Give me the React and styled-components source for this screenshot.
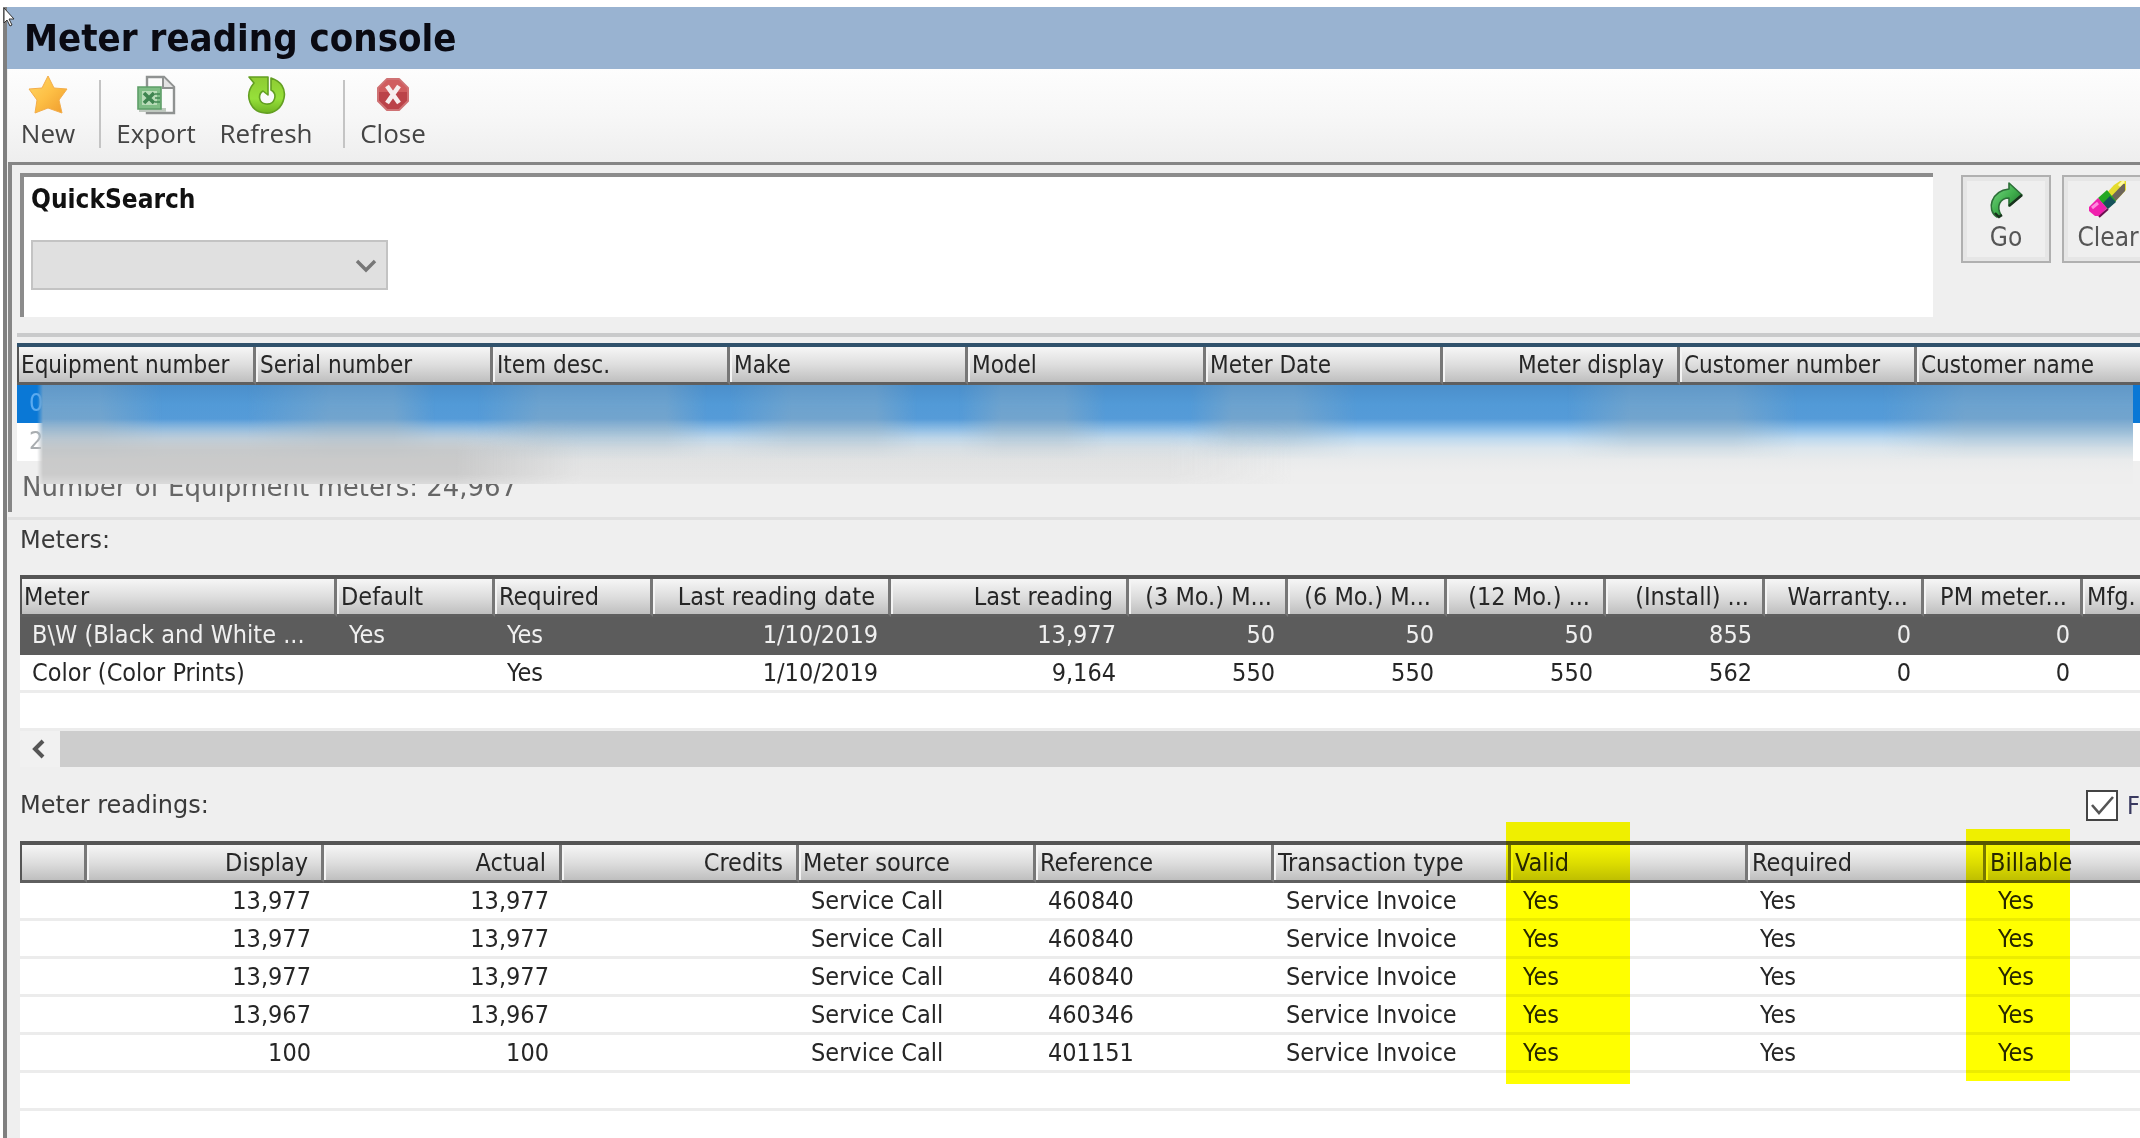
import React from 'react'

import styled, { createGlobalStyle, css } from 'styled-components'

const GlobalStyle = createGlobalStyle`
  * {
    box-sizing: border-box;
  }
  body {
    margin: 0;
    background: #fff;
    color: #262626;
    font-family: 'DejaVu Sans Condensed', 'DejaVu Sans', sans-serif;
    font-size: 25px;
  }
`

const Page = styled.div`
  display: flex;
  height: 100vh;
  padding: 7px 0 0 3px;
  overflow: hidden;
`

const Window = styled.main`
  position: relative;
  display: flex;
  flex: 1;
  flex-direction: column;
  min-width: 0;
  padding-left: 1px;
  border-left: 4px solid #7f7f7f;
  background: #efefef;
`

const Pointer = styled.svg`
  position: absolute;
  top: 0;
  left: -4px;
  width: 12px;
  height: 20px;
`

const TitleBar = styled.header`
  height: 62px;
  margin-left: -1px;
  padding: 0 17px;
  background: #99b3d1;
`

const Title = styled.h1`
  margin: 0;
  color: #0a0a12;
  font-size: 38px;
  line-height: 62px;
`

const Toolbar = styled.nav`
  display: flex;
  align-items: flex-start;
  height: 93px;
  padding-top: 5px;
  background: linear-gradient(#fdfdfd, #f7f7f7 50%, #eee);
`

const ToolButton = styled.button`
  display: flex;
  flex-direction: column;
  align-items: center;
  width: ${props => props.$width}px;
  padding: 0;
  border: 0;
  background: none;
  color: #444;
  font-family: 'Open Sans', 'Noto Sans', sans-serif;
  font-size: 26px;
  line-height: 34px;

  svg {
    width: 40px;
    height: 42px;
  }
`

const Separator = styled.span`
  width: 2px;
  height: 68px;
  margin: 6px 11px 0;
  background: #c4c4c4;
`

const SearchPanel = styled.section`
  padding: 8px 0 10px;
  border-top: 3px solid #858585;
  border-left: 4px solid #868686;
  overflow: hidden;
`

const SearchRow = styled.div`
  display: flex;
  gap: 11px;
  margin: 0 -14px 16px 8px;
`

const SearchBox = styled.div`
  flex: 1;
  height: 144px;
  margin-right: 17px;
  padding: 7px 7px 0;
  border: 4px solid #8c8c8c;
  border-right: 0;
  border-bottom: 0;
  background: #fff;
`

const SearchLabel = styled.label`
  display: block;
  margin-bottom: 26px;
  color: #111;
  font-size: 26px;
  font-weight: bold;
  line-height: 30px;
`

const SelectFrame = styled.div`
  position: relative;
  width: 357px;

  svg {
    position: absolute;
    top: 19px;
    right: 11px;
    width: 22px;
    height: 14px;
    pointer-events: none;
  }
`

const Select = styled.select`
  display: block;
  width: 100%;
  height: 50px;
  border: 2px solid #c3c3c3;
  border-radius: 0;
  background: #e0e0e0;
  opacity: 1;
  appearance: none;
`

const PushButton = styled.button`
  display: flex;
  flex-direction: column;
  align-items: center;
  width: ${props => props.$width}px;
  height: 88px;
  margin-top: 2px;
  padding: 3px 0 0;
  border: 2px solid #b0b0b0;
  background: #efefef;
  box-shadow: inset 0 0 0 4px #e6e6e6;
  color: #555;
  font-family: inherit;
  font-size: 26px;
  line-height: 34px;

  svg {
    width: 42px;
    height: 40px;
  }
`

const Divider = styled.div`
  height: 4px;
  margin: 0 0 6px 5px;
  background: #c9cacb;
`

const GridFrame = styled.div`
  position: relative;
  flex: ${props => (props.$fill ? '1' : 'none')};
  min-height: 0;
  margin-left: ${props => (props.$inset ? '5px' : '12px')};
  border-top: 4px solid ${props => (props.$inset ? '#30516b' : '#555')};
  background: #fff;
`

const Grid = styled.table`
  width: 100%;
  border-collapse: separate;
  border-spacing: 0;
  table-layout: fixed;
  white-space: nowrap;
`

const HeadCell = styled.th`
  height: 38px;
  padding: 0 ${props => (props.$right ? '13px' : '0')} 0 4px;
  border-right: 3px solid #777;
  border-bottom: 3px solid #5f5f5f;
  background: linear-gradient(#f6f6f6, #dedede 50%, #bfbfbf);
  box-shadow: inset 2px 0 #f4f4f4;
  font-size: ${props => (props.$compact ? '24px' : '25px')};
  font-weight: normal;
  line-height: 30px;
  text-align: ${props => (props.$right ? 'right' : 'left')};

  &:first-child {
    box-shadow: inset 2px 0 #555;
  }

  &:last-child {
    border-right: 0;
  }
`

const Row = styled.tr`
  color: ${props => props.$muted && '#a9adb0'};
  ${props =>
    props.$selected &&
    css`
      background: #5c5c5c;
      color: #f0f0f0;
    `}
  ${props =>
    props.$active &&
    css`
      background: #0a78d6;
      color: #5aaaf0;
    `}
`

const Cell = styled.td`
  height: 38px;
  padding: 0 ${props => (props.$right ? '13px' : '0')} 0 12px;
  border-bottom: 3px solid ${props => (props.$plain ? 'transparent' : '#ececec')};
  line-height: 30px;
  text-align: ${props => (props.$right ? 'right' : 'left')};
`

// Smudge over the customer data
const Redaction = styled.div`
  position: absolute;
  top: 38px;
  right: 7px;
  left: 20px;
  height: 99px;
  background: linear-gradient(
    #4b8fcb,
    #529ad7 20%,
    #559bd8 34%,
    #8cbee8 45%,
    #bcd8ee 54%,
    #dce6ed 64%,
    #e9ebec 76%,
    #eee 88%
  );
  mask-image: linear-gradient(to right, transparent, #000 6px);
`

const Smear = styled.div`
  position: absolute;
  inset: 0;
  background: linear-gradient(
    to right,
    #a3b4bd 0 3%,
    transparent 6% 10%,
    #a3b4bd 14% 17%,
    transparent 19% 21%,
    #a3b4bd 24% 30%,
    transparent 32% 33%,
    #a3b4bd 36% 40%,
    transparent 42% 44%,
    #a3b4bd 46% 49%,
    transparent 51% 55%,
    #a3b4bd 57% 60%,
    transparent 63% 73%,
    #a3b4bd 76% 81%,
    transparent 84% 88%,
    #a3b4bd 92% 100%
  );
  mask-image: linear-gradient(rgba(0, 0, 0, 0.25), rgba(0, 0, 0, 0.42) 45%, transparent 75%);
`

const SmearLow = styled.div`
  position: absolute;
  inset: 0;
  background: linear-gradient(to right, #bcbcbc 0 20%, rgba(200, 200, 200, 0.35) 26% 54%, transparent 60%);
  mask-image: linear-gradient(transparent 35%, rgba(0, 0, 0, 0.7) 66% 90%, rgba(0, 0, 0, 0.4));
`

const Status = styled.p`
  margin: 0 0 0 5px;
  padding: 11px 5px 0;
  color: #666;
  font-family: 'DejaVu Sans', sans-serif;
  font-size: 26px;
  line-height: 30px;
`

const SectionBar = styled.div`
  display: flex;
  flex: none;
  align-items: center;
  justify-content: space-between;
  height: ${props => (props.$first ? '55px' : '74px')};
  margin-left: 12px;
  padding: ${props => (props.$first ? '0 0 15px' : '2px 0 0')};
  overflow: hidden;
`

const SectionTitle = styled.h2`
  margin: 0;
  color: #3a3a3a;
  font-family: 'DejaVu Sans', sans-serif;
  font-size: 24px;
  font-weight: normal;
  line-height: 30px;
`

const Edge = styled.div`
  height: 3px;
  margin-top: 5px;
  background: #e1e1e1;
`

const FilterLabel = styled.label`
  display: flex;
  gap: 9px;
  align-items: center;
  width: 54px;
  color: #3a3a60;
`

const CheckBox = styled.input`
  flex: none;
  width: 32px;
  height: 31px;
  margin: 0;
  border: 2px solid #444;
  background: #fff;
  appearance: none;

  &:checked {
    background: #fff
      url("data:image/svg+xml,%3Csvg xmlns='http://www.w3.org/2000/svg' viewBox='0 0 28 27'%3E%3Cpath d='M4 13l7 8L25 5' fill='none' stroke='%23555' stroke-width='2.6'/%3E%3C/svg%3E")
      center / 28px 27px no-repeat;
  }
`

const ScrollBar = styled.div`
  display: flex;
  height: 36px;
  background: #cdcdcd;
`

const ScrollButton = styled.button`
  display: flex;
  align-items: center;
  justify-content: center;
  width: 40px;
  padding: 0 4px 0 0;
  border: 0;
  background: #f1f1f1;

  svg {
    width: 14px;
    height: 20px;
  }
`

const Highlight = styled.div`
  position: absolute;
  top: ${props => props.$top}px;
  left: ${props => props.$left}px;
  width: ${props => props.$width}px;
  height: ${props => props.$height}px;
  background: #ff0;
  mix-blend-mode: multiply;
  pointer-events: none;
`

const StarIcon = () => (
  <svg viewBox="0 0 40 42" aria-hidden="true">
    <defs>
      <linearGradient id="star" x1="0" y1="0" x2="1" y2="1">
        <stop offset="0" stopColor="#ffd765" />
        <stop offset="0.5" stopColor="#fdbf45" />
        <stop offset="1" stopColor="#ee9a2c" />
      </linearGradient>
    </defs>
    <path
      d="M20 2l6 12 13 1-8 11 3 13-14-5-13 5 2-13L1 15l13-1z"
      fill="url(#star)"
      stroke="#f3ad4a"
      strokeLinejoin="round"
    />
  </svg>
)

const ExportIcon = () => (
  <svg viewBox="0 0 40 42" aria-hidden="true">
    <path d="M11 3h17l10 10v26H11z" fill="#fbfbfb" stroke="#8f9291" strokeWidth="2.4" />
    <path d="M27 3v11h11" fill="#e3e3e3" stroke="#8f9291" strokeWidth="2" />
    <path d="M3 34h27v4H3z" fill="#bfc8bf" />
    <path d="M2 13h23v22H2z" fill="#7fbd86" stroke="#5e9e68" strokeWidth="1.6" />
    <path d="M6 17h15v14H6z" fill="#b9dcb8" />
    <path d="M8 19l10 10M18 19L8 29" stroke="#3f8550" strokeWidth="3.6" />
    <path d="M19 20h5M19 24h5M19 28h5" stroke="#418653" strokeWidth="1.6" />
  </svg>
)

// Thick ring open at the top, its arrow head pointing to the upper left
const RefreshIcon = () => (
  <svg viewBox="0 0 40 42" aria-hidden="true">
    <defs>
      <linearGradient id="refresh" x1="0" y1="0" x2="0" y2="1">
        <stop offset="0" stopColor="#8ecb32" />
        <stop offset="0.6" stopColor="#96e03a" />
        <stop offset="1" stopColor="#6fb320" />
      </linearGradient>
    </defs>
    <path
      d="M3 3h19v18l-5-4c-5 3-5 12 3 13 9 1 12-10 5-14V4c10 3 15 11 13 20-2 10-10 16-19 15C5 38-3 22 8 9z"
      fill="url(#refresh)"
      stroke="#639f22"
      strokeWidth="1.6"
      strokeLinejoin="round"
    />
  </svg>
)

const CloseIcon = () => (
  <svg viewBox="0 0 40 42" aria-hidden="true">
    <path
      d="M14 5h12l9 9v13l-9 9H14l-9-9V14z"
      fill="#bb4349"
      stroke="#cf7274"
      strokeWidth="2"
      strokeLinejoin="round"
    />
    <path d="M14 6h12l8 8v4H6v-4z" fill="#d8686a" opacity=".7" />
    <path d="M14 12l12 17M26 12L14 29" stroke="#f7eeee" strokeWidth="4.6" />
  </svg>
)

const GoIcon = () => (
  <svg viewBox="0 0 42 40" aria-hidden="true">
    <defs>
      <linearGradient id="go" x1="0" y1="0" x2="1" y2="1">
        <stop offset="0" stopColor="#7fdc8a" />
        <stop offset="0.5" stopColor="#3fae4c" />
        <stop offset="1" stopColor="#155c25" />
      </linearGradient>
    </defs>
    <path
      d="M24 3l13 12-13 11v-8c-9 0-13 8-8 17l-4 2C1 30 6 11 24 9z"
      fill="url(#go)"
      stroke="#2c6f38"
      strokeWidth="1.6"
      strokeLinejoin="round"
    />
    <path d="M24 26l13-11M10 33l4 4 3-2" fill="none" stroke="#18321c" strokeWidth="2.4" />
  </svg>
)

const EraserIcon = () => (
  <svg viewBox="0 0 42 40" aria-hidden="true">
    <path d="M27 5l6-4h6v9L26 24l-9-8z" fill="#e5dc2e" />
    <path d="M38 4v7L25 25l-5-4L36 4z" fill="#6d655b" />
    <path d="M32 6l5-5" stroke="#fff9a0" strokeWidth="3" />
    <path d="M11 18l9-8 9 11-9 8z" fill="#23a823" />
    <path d="M23 16l6 6-8 7-5-6z" fill="#16525a" />
    <path d="M2 27l9-9 9 10-7 8H8l-6-5z" fill="#f01fae" />
    <path d="M5 28l6-5" stroke="#ff8ade" strokeWidth="3" />
    <path d="M12 37l9-8" stroke="#6b0f4f" strokeWidth="2" />
  </svg>
)

const equipmentColumns = [
  { label: 'Equipment number', width: 239 },
  { label: 'Serial number', width: 237 },
  { label: 'Item desc.', width: 237 },
  { label: 'Make', width: 238 },
  { label: 'Model', width: 238 },
  { label: 'Meter Date', width: 237 },
  { label: 'Meter display', width: 237, right: true },
  { label: 'Customer number', width: 237 },
  { label: 'Customer name' },
]

const meterColumns = [
  { label: 'Meter', width: 317 },
  { label: 'Default', width: 158 },
  { label: 'Required', width: 158 },
  { label: 'Last reading date', width: 238, right: true },
  { label: 'Last reading', width: 238, right: true },
  { label: '(3 Mo.) M...', width: 159, right: true },
  { label: '(6 Mo.) M...', width: 159, right: true },
  { label: '(12 Mo.) ...', width: 159, right: true },
  { label: '(Install) ...', width: 159, right: true },
  { label: 'Warranty...', width: 159, right: true },
  { label: 'PM meter...', width: 159, right: true },
  { label: 'Mfg.' },
]

const readingColumns = [
  { label: '', width: 67 },
  { label: 'Display', width: 237, right: true },
  { label: 'Actual', width: 238, right: true },
  { label: 'Credits', width: 237, right: true },
  { label: 'Meter source', width: 237 },
  { label: 'Reference', width: 238 },
  { label: 'Transaction type', width: 237 },
  { label: 'Valid', width: 237 },
  { label: 'Required', width: 238 },
  { label: 'Billable' },
]

const equipmentRows = [['0'], ['2']]

const meterRows = [
  ['B\\W (Black and White ...', 'Yes', 'Yes', '1/10/2019', '13,977', '50', '50', '50', '855', '0', '0', ''],
  ['Color (Color Prints)', '', 'Yes', '1/10/2019', '9,164', '550', '550', '550', '562', '0', '0', ''],
  [],
]

const reading = (amount, reference) => [
  '',
  amount,
  amount,
  '',
  'Service Call',
  reference,
  'Service Invoice',
  'Yes',
  'Yes',
  'Yes',
]

const readingRows = [
  reading('13,977', '460840'),
  reading('13,977', '460840'),
  reading('13,977', '460840'),
  reading('13,967', '460346'),
  reading('100', '401151'),
  [],
]

const DataGrid = ({ label, columns, rows, selected, active, plain }) => (
  <Grid aria-label={label}>
    <colgroup>
      {columns.map((column, i) => (
        <col key={i} width={column.width} />
      ))}
    </colgroup>
    <thead>
      <tr>
        {columns.map((column, i) => (
          <HeadCell key={i} $right={column.right} $compact={plain}>
            {column.label}
          </HeadCell>
        ))}
      </tr>
    </thead>
    <tbody>
      {rows.map((row, r) => (
        <Row key={r} $selected={r === selected} $active={r === active} $muted={plain}>
          {columns.map((column, i) => (
            <Cell key={i} $right={column.right} $plain={plain || r === selected}>
              {row[i]}
            </Cell>
          ))}
        </Row>
      ))}
    </tbody>
  </Grid>
)

const App = () => (
  <Page>
    <GlobalStyle />
    <Window>
      <TitleBar>
        <Title>Meter reading console</Title>
      </TitleBar>
      <Toolbar>
        <ToolButton $width={80}>
          <StarIcon />
          New
        </ToolButton>
        <Separator />
        <ToolButton $width={88}>
          <ExportIcon />
          Export
        </ToolButton>
        <ToolButton $width={132}>
          <RefreshIcon />
          Refresh
        </ToolButton>
        <Separator />
        <ToolButton $width={74}>
          <CloseIcon />
          Close
        </ToolButton>
      </Toolbar>
      <SearchPanel>
        <SearchRow>
          <SearchBox>
            <SearchLabel htmlFor="quick-search">QuickSearch</SearchLabel>
            <SelectFrame>
              <Select id="quick-search" disabled />
              <svg viewBox="0 0 22 14" aria-hidden="true">
                <path d="M2 2l9 9 9-9" fill="none" stroke="#777" strokeWidth="3.4" />
              </svg>
            </SelectFrame>
          </SearchBox>
          <PushButton $width={90}>
            <GoIcon />
            Go
          </PushButton>
          <PushButton $width={92}>
            <EraserIcon />
            Clear
          </PushButton>
        </SearchRow>
        <Divider />
        <GridFrame $inset>
          <DataGrid label="Equipment" columns={equipmentColumns} rows={equipmentRows} active={0} plain />
          <Redaction>
            <Smear />
            <SmearLow />
          </Redaction>
        </GridFrame>
        <Status>Number of Equipment meters: 24,967</Status>
      </SearchPanel>
      <Edge />
      <SectionBar $first>
        <SectionTitle>Meters:</SectionTitle>
      </SectionBar>
      <GridFrame>
        <DataGrid label="Meters" columns={meterColumns} rows={meterRows} selected={0} />
        <ScrollBar>
          <ScrollButton aria-label="Scroll left">
            <svg viewBox="0 0 14 20" aria-hidden="true">
              <path d="M12 2l-8 8 8 8" fill="none" stroke="#555" strokeWidth="4" />
            </svg>
          </ScrollButton>
        </ScrollBar>
      </GridFrame>
      <SectionBar>
        <SectionTitle>Meter readings:</SectionTitle>
        <FilterLabel>
          <CheckBox type="checkbox" defaultChecked />F
        </FilterLabel>
      </SectionBar>
      <GridFrame $fill>
        <DataGrid label="Meter readings" columns={readingColumns} rows={readingRows} />
        <Highlight $top={-23} $left={1486} $width={124} $height={262} />
        <Highlight $top={-16} $left={1946} $width={104} $height={252} />
      </GridFrame>
      <Pointer viewBox="0 0 12 20" aria-hidden="true">
        <path d="M1 1v15l3-3 3 6 2-1-3-6h5z" fill="#fff" stroke="#333" />
      </Pointer>
    </Window>
  </Page>
)

export default App
